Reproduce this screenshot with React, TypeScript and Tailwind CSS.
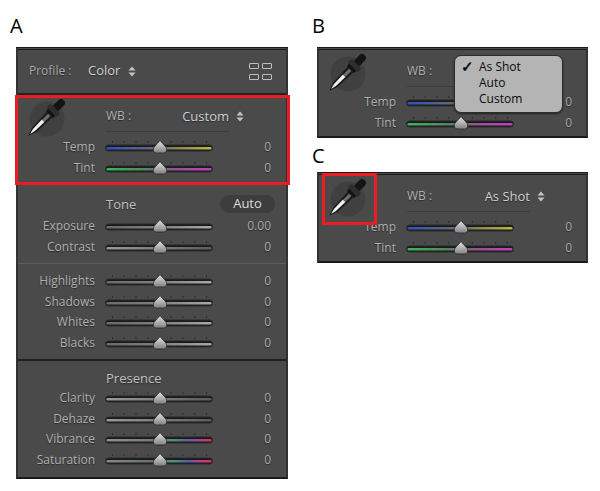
import * as React from "react";

type Stop = [number, string];

const NEUTRAL: Stop[] = [[0, "#9a9a9a"], [0.5, "#7c7c7c"], [1, "#5c5c5c"]];
const DARK: Stop[] = [[0, "#6a6a6a"], [0.5, "#808080"], [1, "#a8a8a8"]];
const TEMP: Stop[] = [[0, "#3550b8"], [0.45, "#5f6a78"], [0.55, "#74745c"], [1, "#bdb840"]];
const TINT: Stop[] = [[0, "#35b858"], [0.45, "#5f7a62"], [0.55, "#7f5f80"], [1, "#c83cc0"]];
const VIBRANCE: Stop[] = [[0, "#909090"], [0.5, "#767676"], [0.62, "#4f9468"], [0.78, "#5a60a8"], [0.88, "#a04a98"], [1, "#d83a3a"]];
const SATURATION: Stop[] = [[0, "#888888"], [0.5, "#5f7068"], [0.62, "#4a9a6c"], [0.78, "#565eb0"], [0.88, "#b040a0"], [1, "#d83a40"]];

const TICKS = [7, 18.75, 30.5, 42.25, 54, 65.75, 77.5, 89.25, 101];

function Slider({ stops = NEUTRAL, ticks = true }: { stops?: Stop[]; ticks?: boolean }) {
  const id = React.useId();
  return (
    <svg width="108" height="16" viewBox="0 0 108 16" className="shrink-0 overflow-visible">
      <defs>
        <linearGradient id={id} x1="0" x2="1" y1="0" y2="0">
          {stops.map(([o, c]) => (
            <stop key={o} offset={o} stopColor={c} />
          ))}
        </linearGradient>
        <linearGradient id={`${id}t`} x1="0" x2="0" y1="0" y2="1">
          <stop offset="0" stopColor="#e6e6e6" />
          <stop offset="1" stopColor="#808080" />
        </linearGradient>
      </defs>
      {ticks &&
        TICKS.map((x) => <rect key={x} x={x} y="2" width="1" height="2" fill="#2c2c2c" />)}
      <rect x="0.5" y="6" width="107" height="6" rx="3" fill="#1a1a1a" stroke="#2a2a2a" />
      <rect x="1.5" y="8" width="105" height="2.5" rx="1.2" fill={`url(#${id})`} />
      <path
        d="M55 1.5 C56.5 3.5 58 5 60 7 C61.5 8.5 62 10.5 61.5 12 Q61 14 58.5 14 L51.5 14 Q49 14 48.5 12 C48 10.5 48.5 8.5 50 7 C52 5 53.5 3.5 55 1.5 Z"
        fill={`url(#${id}t)`}
        stroke="#2a2a2a"
        strokeWidth="0.8"
      />
    </svg>
  );
}

function Row({ label, value = "0", stops, ticks }: { label: string; value?: string; stops?: Stop[]; ticks?: boolean }) {
  return (
    <div className="flex h-[20.5px] items-center">
      <span className="w-[77px] shrink-0 text-right text-[#b0b0b0] [text-shadow:0_1px_1px_#2a2a2a]">{label}</span>
      <div className="ml-[10px]">
        <Slider stops={stops} ticks={ticks} />
      </div>
      <span className="w-[58px] shrink-0 text-right text-[#a8a8a8] [text-shadow:0_1px_1px_#2a2a2a]">{value}</span>
    </div>
  );
}

function UpDown({ className = "" }: { className?: string }) {
  return (
    <svg width="8" height="11" viewBox="0 0 8 11" className={className}>
      <path d="M4 0.5 L7.5 4.5 L0.5 4.5 Z M4 10.5 L7.5 6.5 L0.5 6.5 Z" fill="#c4c4c4" />
    </svg>
  );
}

function Dropper() {
  return (
    <svg width="40" height="40" viewBox="0 0 40 40" className="shrink-0 overflow-visible">
      <circle cx="21" cy="21" r="17.5" fill="#404040" />
      <g transform="rotate(45 20 20)">
        {/* bulb */}
        <rect x="16.2" y="-5" width="7.6" height="14" rx="3.4" fill="#141414" />
        {/* collar */}
        <rect x="13" y="6.5" width="14" height="6" rx="2" fill="#2e2e2e" />
        <rect x="15" y="12" width="10" height="3" fill="#121212" />
        {/* glass */}
        <path d="M16 15 L24 15 L23 37 L20 45 L17 37 Z" fill="#1a1a1a" />
        <path d="M18.2 24 L21.8 24 L21.4 37 L20 42.5 L18.6 37 Z" fill="#f2f2f2" />
        <rect x="18.4" y="15.5" width="3.2" height="8.5" fill="#6e6e6e" />
      </g>
    </svg>
  );
}

function WbSection({ value, pad }: { value?: string; pad: string }) {
  return (
    <div className={`pt-[3px] ${pad}`}>
      <div className="flex h-[39px] items-start">
        <div className="ml-[8px]">
          <Dropper />
        </div>
        <div className="ml-[40px] flex h-[34px] w-[123px] justify-between border-b border-[#3b3b3b] pt-[10px] leading-[16px]">
          <span className="text-[#b0b0b0] [text-shadow:0_1px_1px_#2a2a2a]">WB :</span>
          {value && <span className="text-[13px] text-[#d0d0d0] [text-shadow:0_1px_1px_#2a2a2a]">{value}</span>}
        </div>
        {value && <UpDown className="ml-[7px] mt-[13px]" />}
      </div>
      <Row label="Temp" stops={TEMP} />
      <Row label="Tint" stops={TINT} />
    </div>
  );
}

function Heading({ children }: { children: React.ReactNode }) {
  return (
    <div className="ml-[88px] h-[18px] text-[13px] leading-[18px] text-[#c0c0c0] [text-shadow:0_1px_1px_#2a2a2a]">
      {children}
    </div>
  );
}

function GridIcon() {
  return (
    <div className="grid grid-cols-2 gap-x-[3px] gap-y-[5px]">
      {[0, 1, 2, 3].map((i) => (
        <div key={i} className="h-[6px] w-[10px] rounded-[1px] border border-[#bdbdbd]" />
      ))}
    </div>
  );
}

const PANEL =
  "border-x-2 border-t-[3px] border-b-2 border-x-[#333333] border-t-[#1a1a1a] border-b-[#1a1a1a] border-double bg-[#4a4a4a]";

export default function App() {
  return (
    <div className="flex h-[491px] w-[600px] overflow-hidden bg-white font-['Open_Sans',sans-serif] text-[12px]">
      {/* left figure */}
      <div className="ml-[16px] w-[272px] shrink-0">
        <div className="-ml-[6px] h-[47px] pt-[13px] text-[20px] leading-[26px] text-black">A</div>
        <div className={PANEL}>
          <div className="flex h-[45px] items-center border-b-2 border-[#222222] pb-[1px] pl-[11px] pr-[14px]">
            <span className="w-[59px] text-[#a8a8a8] [text-shadow:0_1px_1px_#2a2a2a]">Profile :</span>
            <span className="text-[13px] text-[#d0d0d0] [text-shadow:0_1px_1px_#2a2a2a]">Color</span>
            <UpDown className="ml-[8px]" />
            <div className="ml-auto">
              <GridIcon />
            </div>
          </div>
          <div className="relative">
            <WbSection value="Custom" pad="pb-[6px]" />
            <div className="absolute -bottom-[1px] -left-[3px] -right-[4px] top-0 border-[3px] border-[#ed1c24]" />
          </div>

          <div className="pt-[11px]">
            <div className="flex items-center pr-[11px]">
              <Heading>Tone</Heading>
              <div className="ml-auto flex h-[18px] w-[55px] items-center justify-center rounded-full bg-[#3d3d3d] text-[13px] text-[#dcdcdc]">
                Auto
              </div>
            </div>
            <div className="mt-[3px]">
              <Row label="Exposure" value="0.00" stops={DARK} ticks={false} />
              <Row label="Contrast" stops={NEUTRAL} />
            </div>
          </div>
          <div className="mt-[6px] h-px bg-[#5c5c5c]" />

          <div className="pt-[7px]">
            <Row label="Highlights" stops={DARK} />
            <Row label="Shadows" stops={DARK} />
            <Row label="Whites" stops={DARK} />
            <Row label="Blacks" stops={DARK} />
          </div>
          <div className="mt-[6px] h-[2px] bg-[#202020]" />

          <div className="pb-[7px] pt-[8px]">
            <Heading>Presence</Heading>
            <div className="mt-[1px]">
              <Row label="Clarity" />
              <Row label="Dehaze" />
              <Row label="Vibrance" stops={VIBRANCE} />
              <Row label="Saturation" stops={SATURATION} />
            </div>
          </div>
        </div>
      </div>

      {/* right figures */}
      <div className="ml-[29px] w-[271px] shrink-0">
        <div className="-ml-[5px] h-[47px] pt-[13px] text-[20px] leading-[26px] text-black">B</div>
        <div className={`relative ${PANEL}`}>
          <WbSection pad="pb-[3px]" />
          <div className="absolute left-[135px] top-[5px] h-[58px] w-[109px] rounded-[7px] border border-[#2c2c2c] bg-[#b4b4b4] pl-[24px] pt-[3px] text-[12px] font-medium leading-[16px] text-[#0c0c0c] shadow-[0_1px_2px_#222222]">
            <span className="absolute left-[6px] top-[2px] text-[15px] font-bold">✓</span>
            <div>As Shot</div>
            <div>Auto</div>
            <div>Custom</div>
          </div>
        </div>
        <div className="-ml-[5px] h-[34px] pt-[5px] text-[20px] leading-[26px] text-black">C</div>
        <div className={`relative ${PANEL}`}>
          <WbSection value="As Shot" pad="pb-[3px]" />
          <div className="absolute left-[3px] -top-[2px] h-[52px] w-[55px] border-[3px] border-[#ed1c24]" />
        </div>
      </div>
    </div>
  );
}
